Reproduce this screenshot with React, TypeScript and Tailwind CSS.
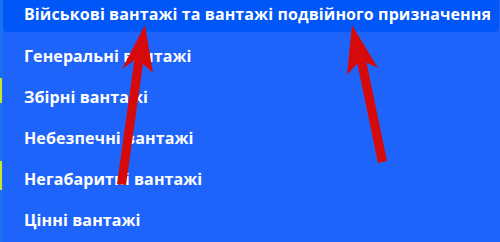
import React from "react";

const items = [
    "Генеральні вантажі",
    "Збірні вантажі",
    "Небезпечні вантажі",
    "Негабаритні вантажі",
    "Цінні вантажі",
];

function Arrows() {
    return (
        <svg className="pointer-events-none absolute inset-0" width="500" height="242" viewBox="0 0 500 242">
            <g fill="#d60a0a" stroke="none">
                <polygon points="117,184 126,185 143.5,60 134.5,59" />
                <polygon points="145,25 153,73 141,62 135,60 122,69" />
                <polygon points="378,163 387,161 366,60 357,62" />
                <polygon points="352,25 378,68 365,62 357,64 347,75" />
            </g>
        </svg>
    );
}

export default function App() {
    return (
        <div
            className="relative h-[242px] w-[500px] overflow-hidden bg-[#1f64fa]"
            style={{ fontFamily: '"Open Sans", "Noto Sans", sans-serif' }}
        >
            {/* left edge strip */}
            <div className="absolute left-0 top-0 h-full w-[3px] bg-[#1b70f0]">
                <div className="absolute left-0 top-[78px] h-[25px] w-[2px] bg-[#c6e52c]" />
                <div className="absolute left-0 top-[161px] h-[29px] w-[2px] bg-[#c6e52c]" />
            </div>
            <ul className="flex flex-col pl-[3px] pr-[1px]">
                <li className="flex h-[32px] items-center rounded-b-[4px] bg-[#0056f6] pb-[4px] pl-[21px] text-[16px] font-bold tracking-[0.1px] text-white">
                    Військові вантажі та вантажі подвійного призначення
                </li>
                {items.map((label, i) => (
                    <li
                        key={label}
                        className={
                            "flex h-[41px] items-center pl-[21px] text-[16px] font-bold tracking-[0.1px] text-white" +
                            (i === 0 ? " mt-[3px]" : "")
                        }
                    >
                        {label}
                    </li>
                ))}
            </ul>
            <Arrows />
        </div>
    );
}
